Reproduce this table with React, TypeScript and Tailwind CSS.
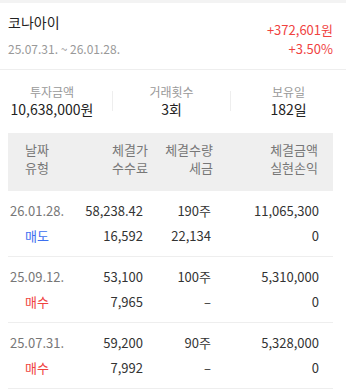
import React from "react";

const rows = [
  { date: "26.01.28.", type: "매도", sell: true, price: "58,238.42", qty: "190주", amount: "11,065,300", fee: "16,592", tax: "22,134", pnl: "0" },
  { date: "25.09.12.", type: "매수", sell: false, price: "53,100", qty: "100주", amount: "5,310,000", fee: "7,965", tax: "–", pnl: "0" },
  { date: "25.07.31.", type: "매수", sell: false, price: "59,200", qty: "90주", amount: "5,328,000", fee: "7,992", tax: "–", pnl: "0" },
];

export default function App() {
  return (
    <div
      className="w-[346px] h-[391px] bg-white overflow-hidden"
      style={{ fontFamily: '"Noto Sans CJK KR", "Noto Sans", sans-serif' }}
    >
      <div className="h-[3px] bg-[#f3f3f3]" />
      <div className="flex justify-between pl-2 pr-[13px] pt-[9px] pb-[11px] border-b border-[#eeeeee]">
        <div>
          <div className="text-[14px] leading-[20px] text-[#222]">코나아이</div>
          <div className="mt-[8px] text-[12px] leading-[18px] text-[#999]">25.07.31. ~ 26.01.28.</div>
        </div>
        <div className="mt-[8px] text-right text-[13px] leading-[19px] text-[#f0433f]">
          <div>+372,601원</div>
          <div>+3.50%</div>
        </div>
      </div>
      <div className="flex items-center pt-[14px] pb-[15px]">
        <div className="w-[112px] pr-2 text-center">
          <div className="text-[12px] leading-[16px] text-[#999]">투자금액</div>
          <div className="text-[14px] leading-[18px] text-[#222]">10,638,000원</div>
        </div>
        <div className="w-px h-[20px] bg-[#eeeeee]" />
        <div className="w-[117px] text-center">
          <div className="text-[12px] leading-[16px] text-[#999]">거래횟수</div>
          <div className="text-[14px] leading-[18px] text-[#222]">3회</div>
        </div>
        <div className="w-px h-[20px] bg-[#eeeeee]" />
        <div className="flex-1 text-center">
          <div className="text-[12px] leading-[16px] text-[#999]">보유일</div>
          <div className="text-[14px] leading-[18px] text-[#222]">182일</div>
        </div>
      </div>
      <div className="mx-2 w-[325px]">
        <div className="bg-[#efefef] pt-[8px] pb-[14px] text-[13px] leading-[18px] text-[#777]">
          <div className="grid grid-cols-[58px_82px_65px_1fr]">
            <div className="text-center">날짜</div>
            <div className="text-right">체결가</div>
            <div className="text-right">체결수량</div>
            <div className="text-right pr-[15px]">체결금액</div>
          </div>
          <div className="grid grid-cols-[58px_82px_65px_1fr]">
            <div className="text-center">유형</div>
            <div className="text-right">수수료</div>
            <div className="text-right">세금</div>
            <div className="text-right pr-[15px]">실현손익</div>
          </div>
        </div>
        {rows.map((r) => (
          <div key={r.date} className="pt-[10px] pb-[10px] border-b border-[#eeeeee] text-[13px] leading-[20px] text-[#333]">
            <div className="grid grid-cols-[58px_82px_65px_1fr]">
              <div className="text-center text-[#777]">{r.date}</div>
              <div className="text-right pr-[5px]">{r.price}</div>
              <div className="text-right pr-[2px]">{r.qty}</div>
              <div className="text-right pr-[14px]">{r.amount}</div>
            </div>
            <div className="grid grid-cols-[58px_82px_65px_1fr] mt-[5px]">
              <div className={`text-center ${r.sell ? "text-[#3d6ff0]" : "text-[#f0433f]"}`}>{r.type}</div>
              <div className="text-right pr-[5px]">{r.fee}</div>
              <div className="text-right pr-[2px]">{r.tax}</div>
              <div className="text-right pr-[14px]">{r.pnl}</div>
            </div>
          </div>
        ))}
      </div>
    </div>
  );
}
